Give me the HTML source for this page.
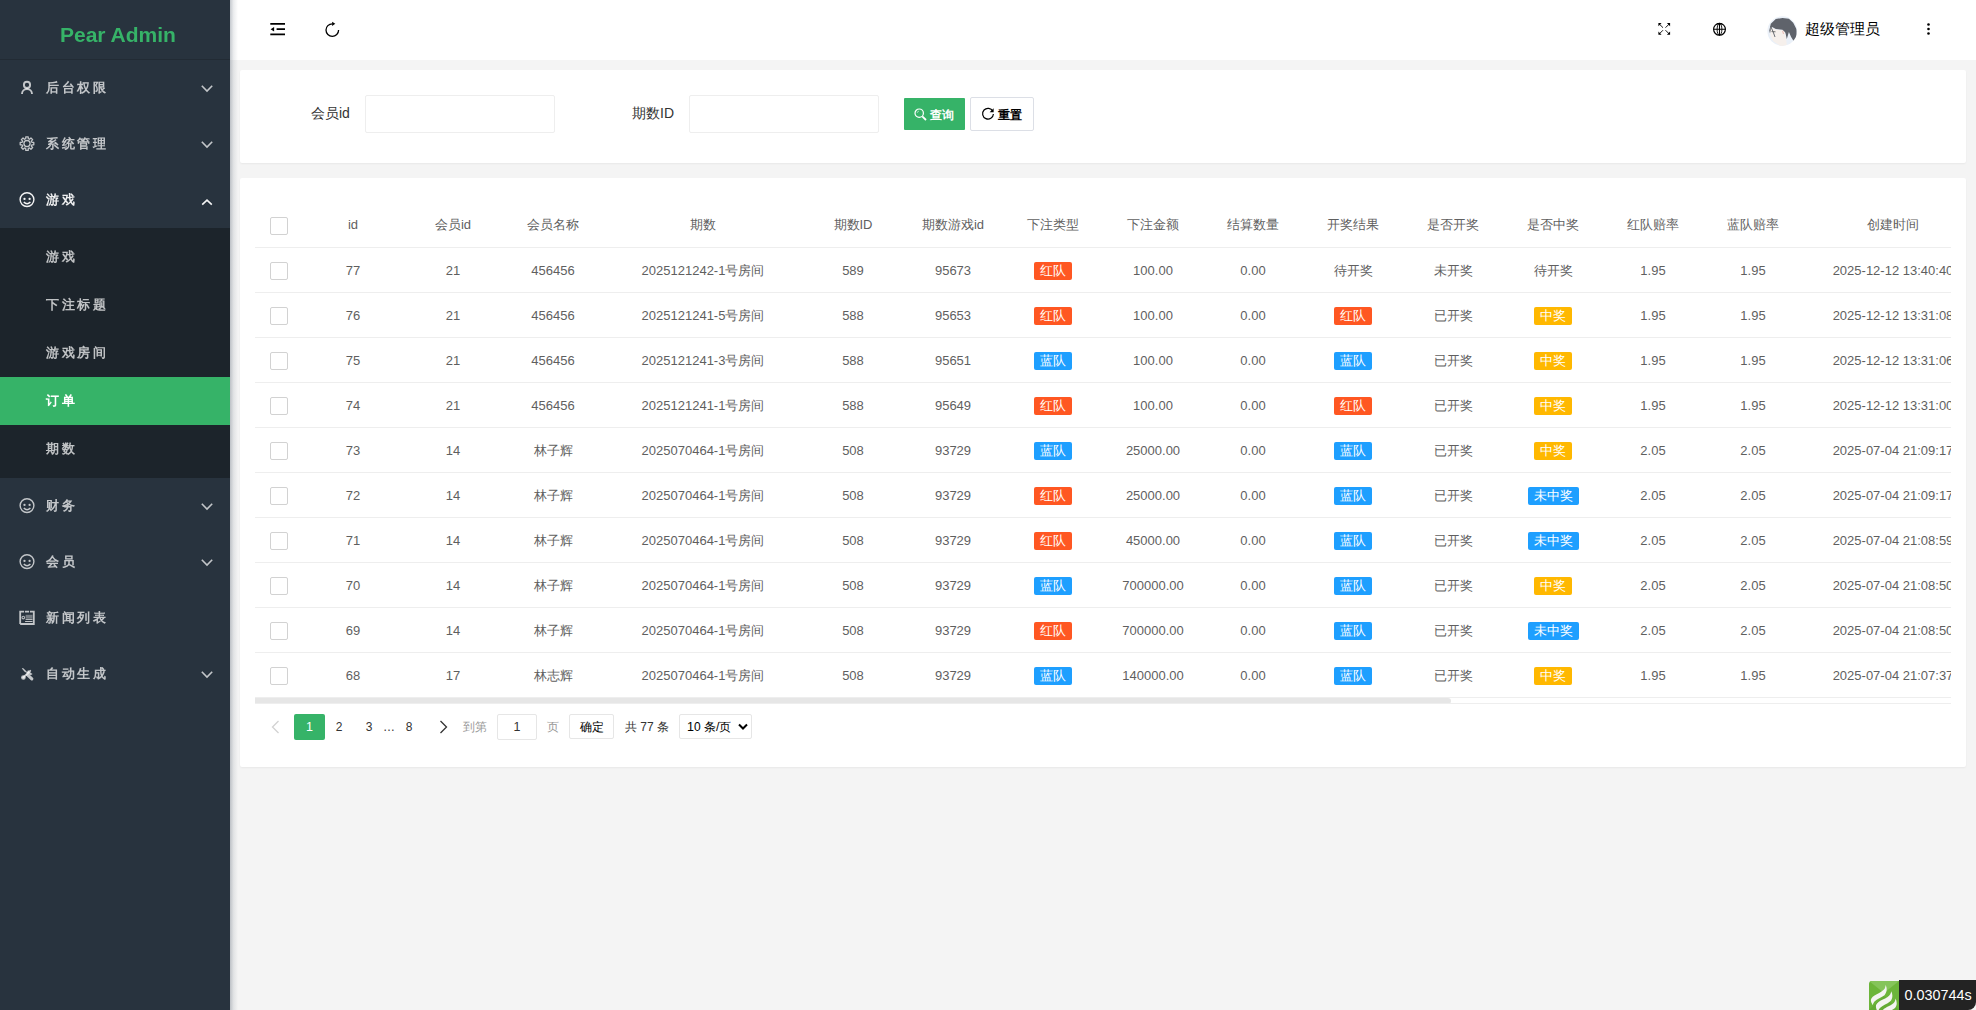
<!DOCTYPE html><html><head><meta charset="utf-8"><style>
*{box-sizing:border-box;margin:0;padding:0}
html,body{width:1976px;height:1010px;overflow:hidden}
body{font-family:"Liberation Sans",sans-serif;font-size:14px;color:#333;background:#f4f4f4;position:relative}
.a{position:absolute}
#side{position:absolute;left:0;top:0;width:230px;height:1010px;background:#28333e;z-index:5;will-change:transform}
#sh{position:absolute;left:230px;top:0;width:8px;height:1010px;background:linear-gradient(to right,rgba(40,55,75,.27),rgba(40,55,75,.09) 45%,rgba(40,55,75,0));z-index:4}
#logo{position:absolute;left:0;top:0;width:230px;height:60px;border-bottom:1px solid rgba(0,0,0,.15)}
#logo span{position:absolute;left:60px;top:21px;font-size:21px;font-weight:bold;color:#36b368;line-height:28px}
.mi{position:absolute;left:0;width:230px;height:56px;color:rgba(255,255,255,.72)}
.mi .t{position:absolute;left:46px;top:0;line-height:56px;font-size:13px;letter-spacing:2.7px;font-weight:bold}
.mi svg,.ci svg{position:absolute}
#child{position:absolute;left:0;top:228px;width:230px;height:250px;background:#1c242b}
.ci{position:absolute;left:0;width:230px;height:48px;color:rgba(255,255,255,.72)}
.ci .t{position:absolute;left:46px;top:0;line-height:48px;font-size:13px;letter-spacing:2.7px;font-weight:bold}
.ci.act{background:#36b368;color:#fff}
#head{position:absolute;left:230px;top:0;width:1746px;height:60px;background:#fff}
.card{position:absolute;left:240px;width:1726px;background:#fff;border-radius:2px;box-shadow:0 1px 2px rgba(0,0,0,.05)}
.lbl{position:absolute;font-size:14px;color:#333;line-height:20px;white-space:nowrap}
.inp{position:absolute;width:190px;height:38px;border:1px solid #eee;border-radius:2px;background:#fff}
.c{position:absolute;text-align:center;color:#5f5f5f;font-size:13px;line-height:20px;white-space:nowrap}
.hl{position:absolute;left:255px;width:1696px;height:1px;background:#eee}
.cb{position:absolute;left:270px;width:18px;height:18px;border:1px solid #d2d2d2;border-radius:2px;background:#fff}
.bd{display:inline-block;height:18px;line-height:18px;padding:0 6px;font-size:13px;color:#fff;border-radius:2px;vertical-align:top}
.red{background:#ff5722}.blue{background:#1e9fff}.org{background:#ffb800}
.pg{position:absolute;font-size:12px;line-height:26px;height:26px;text-align:center;color:#333;white-space:nowrap}
</style></head><body>
<div id="side"><div id="logo"><span>Pear Admin</span></div>
<div class="mi" style="top:60px;"><span class="t">后台权限</span></div>
<div class="mi" style="top:116px;"><span class="t">系统管理</span></div>
<div class="mi" style="top:172px;color:rgba(255,255,255,.92);"><span class="t">游戏</span></div>
<div id="child">
<div class="ci" style="top:5px"><span class="t">游戏</span></div>
<div class="ci" style="top:53px"><span class="t">下注标题</span></div>
<div class="ci" style="top:101px"><span class="t">游戏房间</span></div>
<div class="ci act" style="top:149px"><span class="t">订单</span></div>
<div class="ci" style="top:197px"><span class="t">期数</span></div>
</div>
<div class="mi" style="top:478px;"><span class="t">财务</span></div>
<div class="mi" style="top:534px;"><span class="t">会员</span></div>
<div class="mi" style="top:590px;"><span class="t">新闻列表</span></div>
<div class="mi" style="top:646px;"><span class="t">自动生成</span></div>
<svg class="a" style="left:0;top:0" width="230" height="1010" viewBox="0 0 230 1010"><circle cx="27" cy="84.9" r="3.1" fill="none" stroke="rgba(255,255,255,.72)" stroke-width="1.9"/><path d="M22 94 A5 5 0 0 1 32 94" fill="none" stroke="rgba(255,255,255,.72)" stroke-width="1.9"/><path d="M25.71 138.77 L25.80 136.80 L28.20 136.80 L28.29 138.77 L29.50 139.27 L30.96 137.95 L32.65 139.64 L31.33 141.10 L31.83 142.31 L33.80 142.40 L33.80 144.80 L31.83 144.89 L31.33 146.10 L32.65 147.56 L30.96 149.25 L29.50 147.93 L28.29 148.43 L28.20 150.40 L25.80 150.40 L25.71 148.43 L24.50 147.93 L23.04 149.25 L21.35 147.56 L22.67 146.10 L22.17 144.89 L20.20 144.80 L20.20 142.40 L22.17 142.31 L22.67 141.10 L21.35 139.64 L23.04 137.95 L24.50 139.27 Z" fill="none" stroke="rgba(255,255,255,.72)" stroke-width="1.3" stroke-linejoin="round"/><circle cx="27" cy="143.6" r="3.1" fill="none" stroke="rgba(255,255,255,.72)" stroke-width="1.3"/><circle cx="27" cy="199.6" r="6.9" fill="none" stroke="rgba(255,255,255,.95)" stroke-width="1.4"/><circle cx="24.5" cy="198.9" r="1.15" fill="rgba(255,255,255,.95)"/><circle cx="29.6" cy="198.9" r="1.15" fill="rgba(255,255,255,.95)"/><path d="M23.8 202.0 Q27 205.4 30.4 202.0" fill="none" stroke="rgba(255,255,255,.95)" stroke-width="1.4"/><circle cx="27" cy="505.6" r="6.9" fill="none" stroke="rgba(255,255,255,.72)" stroke-width="1.4"/><circle cx="24.5" cy="504.90000000000003" r="1.15" fill="rgba(255,255,255,.72)"/><circle cx="29.6" cy="504.90000000000003" r="1.15" fill="rgba(255,255,255,.72)"/><path d="M23.8 508.0 Q27 511.40000000000003 30.4 508.0" fill="none" stroke="rgba(255,255,255,.72)" stroke-width="1.4"/><circle cx="27" cy="561.6" r="6.9" fill="none" stroke="rgba(255,255,255,.72)" stroke-width="1.4"/><circle cx="24.5" cy="560.9" r="1.15" fill="rgba(255,255,255,.72)"/><circle cx="29.6" cy="560.9" r="1.15" fill="rgba(255,255,255,.72)"/><path d="M23.8 564.0 Q27 567.4 30.4 564.0" fill="none" stroke="rgba(255,255,255,.72)" stroke-width="1.4"/><path d="M20.2 624.0 V611.6999999999999 H24 M24.9 611.6999999999999 H29.1 M30 611.6999999999999 H33.8 V624.0 H20.2" fill="none" stroke="rgba(255,255,255,.72)" stroke-width="1.8"/><circle cx="23.3" cy="617.5999999999999" r="1.3" fill="none" stroke="rgba(255,255,255,.72)" stroke-width="1.1" opacity=".9"/><rect x="25.6" y="614.8" width="6.9" height="3.8" fill="rgba(255,255,255,.72)" opacity=".5"/><path d="M25.6 619.4 H32.5 M25.1 621.5 H32.5" stroke="rgba(255,255,255,.72)" stroke-width="1" /><g transform="translate(27 673.5)"><path d="M-3.6 3.9 L3.2 -2.6" stroke="rgba(255,255,255,.72)" stroke-width="2" stroke-linecap="round"/><circle cx="-3.6" cy="4" r="2.3" fill="rgba(255,255,255,.72)"/><path d="M1.2 -3.6 A2.5 2.5 0 1 0 5.6 0.4 L4 -0.4 L3.6 -1 L2.6 -1.6 Z" fill="rgba(255,255,255,.72)"/><path d="M-5.2 -4.9 L-4 -5.6 L-0.6 -2.2 L-1.7 -1.1 Z" fill="rgba(255,255,255,.72)"/><path d="M-0.8 -1.8 L0.7 -0.3" stroke="rgba(255,255,255,.72)" stroke-width="1.2"/><path d="M0.6 1.4 L4.8 5.3" stroke="rgba(255,255,255,.72)" stroke-width="3.2" stroke-linecap="round"/></g><path d="M201.8 85.8 L207 91 L212.2 85.8" fill="none" stroke="rgba(255,255,255,.72)" stroke-width="1.6"/><path d="M201.8 141.8 L207 147 L212.2 141.8" fill="none" stroke="rgba(255,255,255,.72)" stroke-width="1.6"/><path d="M201.8 503.8 L207 509 L212.2 503.8" fill="none" stroke="rgba(255,255,255,.72)" stroke-width="1.6"/><path d="M201.8 559.8 L207 565 L212.2 559.8" fill="none" stroke="rgba(255,255,255,.72)" stroke-width="1.6"/><path d="M201.8 671.8 L207 677 L212.2 671.8" fill="none" stroke="rgba(255,255,255,.72)" stroke-width="1.6"/><path d="M202.2 204.6 L207 200.1 L211.8 204.6" fill="none" stroke="rgba(255,255,255,.95)" stroke-width="1.6"/></svg>
</div><div id="sh"></div>
<div id="head"></div>
<svg class="a" style="left:0;top:0" width="1976" height="60" viewBox="0 0 1976 60"><path d="M270.3 23.9 H285 M276.6 29.2 H285 M270.3 34.4 H285" stroke="#000" stroke-width="1.8"/><path d="M270.6 29.2 L274.1 26.9 V31.5 Z" fill="#000"/><path d="M338.6 30.1 A6.3 6.3 0 1 1 332.3 23.8" fill="none" stroke="#000" stroke-width="1.3"/><path d="M332.1 21.7 L335.3 23.8 L332.1 25.900000000000002 Z" fill="#000"/><path d="M1659.2 23.9 L1663 27.7 M1669.3 23.9 L1665.5 27.7 M1659.2 34 L1663 30.2 M1669.3 34 L1665.5 30.2" stroke="#000" stroke-width="0.9"/><path d="M1658.4 23.1 H1661.6 L1658.4 26.3 Z M1670.1 23.1 H1666.9 L1670.1 26.3 Z M1658.4 34.8 H1661.6 L1658.4 31.6 Z M1670.1 34.8 H1666.9 L1670.1 31.6 Z" fill="#000"/><circle cx="1719.5" cy="29.3" r="5.9" fill="none" stroke="#000" stroke-width="1.2"/><ellipse cx="1719.5" cy="29.3" rx="2.4" ry="5.9" fill="none" stroke="#000" stroke-width="0.9"/><path d="M1713.6 29.3 H1725.4 M1719.5 23.4 V35.2 M1716.9 23.700000000000003 H1722.1" stroke="#000" stroke-width="1.1"/></svg>
<svg class="a" style="left:1764px;top:12px" width="36" height="36" viewBox="0 0 36 36"><defs><clipPath id="av"><circle cx="18.2" cy="19.1" r="14.8"/></clipPath></defs><g clip-path="url(#av)"><rect width="36" height="36" fill="#eaf0f8"/>
<path d="M5.3 18.5 L6.8 11.8 L11.8 7.1 L18.5 5.9 L24.9 6.8 L29.2 10.7 L32.4 17.1 L32.8 24.9 L29.6 28.9 L27.1 24.9 L24.9 20 L22.8 27.1 L21.4 20.7 L18.5 17.8 L11.8 17.1 L8.2 15 L6 21.4 Z" fill="#5f636b"/>
<path d="M6.8 15.3 L11.8 17.8 L18.5 18.2 L20.7 20 L22.1 27.1 L22.8 33 L17.1 34.5 L9.3 29.2 L6.4 23.2 Z" fill="#f6f0ec"/>
<path d="M6.5 14 L9 19.5 L11 25" stroke="#6a6e76" stroke-width="1" fill="none"/>
<path d="M7.5 19.6 L11.5 19.8" stroke="#555" stroke-width=".8"/>
<path d="M18.6 18.8 L19.5 22" stroke="#e8b8b0" stroke-width="1"/>
</g></svg>
<div class="a" style="left:1805px;top:18px;font-size:15px;line-height:22px;color:#000;white-space:nowrap">超级管理员</div>
<svg class="a" style="left:1926px;top:22px" width="5" height="14" viewBox="0 0 5 14"><circle cx="2.5" cy="2.5" r="1.3" fill="#000"/><circle cx="2.5" cy="7" r="1.3" fill="#000"/><circle cx="2.5" cy="11.5" r="1.3" fill="#000"/></svg>
<div class="card" style="top:70px;height:93px"></div>
<div class="lbl" style="left:311px;top:103px">会员id</div>
<div class="inp" style="left:365px;top:95px"></div>
<div class="lbl" style="left:632px;top:103px">期数ID</div>
<div class="inp" style="left:689px;top:95px"></div>
<div class="a" style="left:904px;top:98px;width:61px;height:32px;background:#36b368;border-radius:1px"></div>
<svg class="a" style="left:914px;top:108px" width="13" height="13" viewBox="0 0 13 13"><circle cx="5.2" cy="5.2" r="4.2" fill="none" stroke="#fff" stroke-width="1.2"/><path d="M8.3 8.3 L12 12" stroke="#fff" stroke-width="1.8"/><path d="M3.3 4.5 A2 2 0 0 1 4.5 3.3" stroke="#fff" stroke-width=".9" fill="none"/></svg>
<div class="a" style="left:930px;top:106px;font-size:12px;line-height:18px;color:#fff;font-weight:bold;white-space:nowrap">查询</div>
<div class="a" style="left:970px;top:97px;width:64px;height:34px;background:#fff;border:1px solid #dcdfe6;border-radius:2px"></div>
<svg class="a" style="left:981px;top:107px" width="14" height="14" viewBox="0 0 14 14"><path d="M11.8 4.2 A5.4 5.4 0 1 0 12.4 7" fill="none" stroke="#000" stroke-width="1.2"/><path d="M12.6 1.2 V5.2 H8.6 Z" fill="#000"/></svg>
<div class="a" style="left:998px;top:106px;font-size:12px;line-height:18px;color:#000;font-weight:bold;white-space:nowrap">重置</div>
<div class="card" style="top:178px;height:589px"></div>
<div class="a" style="left:0;top:0;width:1951px;height:1010px;overflow:hidden">
<div class="cb" style="top:217px"></div>
<div class="c" style="left:253px;width:200px;top:215px">id</div>
<div class="c" style="left:353px;width:200px;top:215px">会员id</div>
<div class="c" style="left:453px;width:200px;top:215px">会员名称</div>
<div class="c" style="left:603px;width:200px;top:215px">期数</div>
<div class="c" style="left:753px;width:200px;top:215px">期数ID</div>
<div class="c" style="left:853px;width:200px;top:215px">期数游戏id</div>
<div class="c" style="left:953px;width:200px;top:215px">下注类型</div>
<div class="c" style="left:1053px;width:200px;top:215px">下注金额</div>
<div class="c" style="left:1153px;width:200px;top:215px">结算数量</div>
<div class="c" style="left:1253px;width:200px;top:215px">开奖结果</div>
<div class="c" style="left:1353px;width:200px;top:215px">是否开奖</div>
<div class="c" style="left:1453px;width:200px;top:215px">是否中奖</div>
<div class="c" style="left:1553px;width:200px;top:215px">红队赔率</div>
<div class="c" style="left:1653px;width:200px;top:215px">蓝队赔率</div>
<div class="c" style="left:1793px;width:200px;top:215px">创建时间</div>
<div class="hl" style="top:247px"></div>
<div class="cb" style="top:262px"></div>
<div class="c" style="left:253px;width:200px;top:261px">77</div>
<div class="c" style="left:353px;width:200px;top:261px">21</div>
<div class="c" style="left:453px;width:200px;top:261px">456456</div>
<div class="c" style="left:603px;width:200px;top:261px">2025121242-1号房间</div>
<div class="c" style="left:753px;width:200px;top:261px">589</div>
<div class="c" style="left:853px;width:200px;top:261px">95673</div>
<div class="c" style="left:953px;width:200px;top:262px;line-height:18px"><span class="bd red">红队</span></div>
<div class="c" style="left:1053px;width:200px;top:261px">100.00</div>
<div class="c" style="left:1153px;width:200px;top:261px">0.00</div>
<div class="c" style="left:1253px;width:200px;top:261px">待开奖</div>
<div class="c" style="left:1353px;width:200px;top:261px">未开奖</div>
<div class="c" style="left:1453px;width:200px;top:261px">待开奖</div>
<div class="c" style="left:1553px;width:200px;top:261px">1.95</div>
<div class="c" style="left:1653px;width:200px;top:261px">1.95</div>
<div class="c" style="left:1793px;width:200px;top:261px">2025-12-12 13:40:40</div>
<div class="hl" style="top:292px"></div>
<div class="cb" style="top:307px"></div>
<div class="c" style="left:253px;width:200px;top:306px">76</div>
<div class="c" style="left:353px;width:200px;top:306px">21</div>
<div class="c" style="left:453px;width:200px;top:306px">456456</div>
<div class="c" style="left:603px;width:200px;top:306px">2025121241-5号房间</div>
<div class="c" style="left:753px;width:200px;top:306px">588</div>
<div class="c" style="left:853px;width:200px;top:306px">95653</div>
<div class="c" style="left:953px;width:200px;top:307px;line-height:18px"><span class="bd red">红队</span></div>
<div class="c" style="left:1053px;width:200px;top:306px">100.00</div>
<div class="c" style="left:1153px;width:200px;top:306px">0.00</div>
<div class="c" style="left:1253px;width:200px;top:307px;line-height:18px"><span class="bd red">红队</span></div>
<div class="c" style="left:1353px;width:200px;top:306px">已开奖</div>
<div class="c" style="left:1453px;width:200px;top:307px;line-height:18px"><span class="bd org">中奖</span></div>
<div class="c" style="left:1553px;width:200px;top:306px">1.95</div>
<div class="c" style="left:1653px;width:200px;top:306px">1.95</div>
<div class="c" style="left:1793px;width:200px;top:306px">2025-12-12 13:31:08</div>
<div class="hl" style="top:337px"></div>
<div class="cb" style="top:352px"></div>
<div class="c" style="left:253px;width:200px;top:351px">75</div>
<div class="c" style="left:353px;width:200px;top:351px">21</div>
<div class="c" style="left:453px;width:200px;top:351px">456456</div>
<div class="c" style="left:603px;width:200px;top:351px">2025121241-3号房间</div>
<div class="c" style="left:753px;width:200px;top:351px">588</div>
<div class="c" style="left:853px;width:200px;top:351px">95651</div>
<div class="c" style="left:953px;width:200px;top:352px;line-height:18px"><span class="bd blue">蓝队</span></div>
<div class="c" style="left:1053px;width:200px;top:351px">100.00</div>
<div class="c" style="left:1153px;width:200px;top:351px">0.00</div>
<div class="c" style="left:1253px;width:200px;top:352px;line-height:18px"><span class="bd blue">蓝队</span></div>
<div class="c" style="left:1353px;width:200px;top:351px">已开奖</div>
<div class="c" style="left:1453px;width:200px;top:352px;line-height:18px"><span class="bd org">中奖</span></div>
<div class="c" style="left:1553px;width:200px;top:351px">1.95</div>
<div class="c" style="left:1653px;width:200px;top:351px">1.95</div>
<div class="c" style="left:1793px;width:200px;top:351px">2025-12-12 13:31:06</div>
<div class="hl" style="top:382px"></div>
<div class="cb" style="top:397px"></div>
<div class="c" style="left:253px;width:200px;top:396px">74</div>
<div class="c" style="left:353px;width:200px;top:396px">21</div>
<div class="c" style="left:453px;width:200px;top:396px">456456</div>
<div class="c" style="left:603px;width:200px;top:396px">2025121241-1号房间</div>
<div class="c" style="left:753px;width:200px;top:396px">588</div>
<div class="c" style="left:853px;width:200px;top:396px">95649</div>
<div class="c" style="left:953px;width:200px;top:397px;line-height:18px"><span class="bd red">红队</span></div>
<div class="c" style="left:1053px;width:200px;top:396px">100.00</div>
<div class="c" style="left:1153px;width:200px;top:396px">0.00</div>
<div class="c" style="left:1253px;width:200px;top:397px;line-height:18px"><span class="bd red">红队</span></div>
<div class="c" style="left:1353px;width:200px;top:396px">已开奖</div>
<div class="c" style="left:1453px;width:200px;top:397px;line-height:18px"><span class="bd org">中奖</span></div>
<div class="c" style="left:1553px;width:200px;top:396px">1.95</div>
<div class="c" style="left:1653px;width:200px;top:396px">1.95</div>
<div class="c" style="left:1793px;width:200px;top:396px">2025-12-12 13:31:00</div>
<div class="hl" style="top:427px"></div>
<div class="cb" style="top:442px"></div>
<div class="c" style="left:253px;width:200px;top:441px">73</div>
<div class="c" style="left:353px;width:200px;top:441px">14</div>
<div class="c" style="left:453px;width:200px;top:441px">林子辉</div>
<div class="c" style="left:603px;width:200px;top:441px">2025070464-1号房间</div>
<div class="c" style="left:753px;width:200px;top:441px">508</div>
<div class="c" style="left:853px;width:200px;top:441px">93729</div>
<div class="c" style="left:953px;width:200px;top:442px;line-height:18px"><span class="bd blue">蓝队</span></div>
<div class="c" style="left:1053px;width:200px;top:441px">25000.00</div>
<div class="c" style="left:1153px;width:200px;top:441px">0.00</div>
<div class="c" style="left:1253px;width:200px;top:442px;line-height:18px"><span class="bd blue">蓝队</span></div>
<div class="c" style="left:1353px;width:200px;top:441px">已开奖</div>
<div class="c" style="left:1453px;width:200px;top:442px;line-height:18px"><span class="bd org">中奖</span></div>
<div class="c" style="left:1553px;width:200px;top:441px">2.05</div>
<div class="c" style="left:1653px;width:200px;top:441px">2.05</div>
<div class="c" style="left:1793px;width:200px;top:441px">2025-07-04 21:09:17</div>
<div class="hl" style="top:472px"></div>
<div class="cb" style="top:487px"></div>
<div class="c" style="left:253px;width:200px;top:486px">72</div>
<div class="c" style="left:353px;width:200px;top:486px">14</div>
<div class="c" style="left:453px;width:200px;top:486px">林子辉</div>
<div class="c" style="left:603px;width:200px;top:486px">2025070464-1号房间</div>
<div class="c" style="left:753px;width:200px;top:486px">508</div>
<div class="c" style="left:853px;width:200px;top:486px">93729</div>
<div class="c" style="left:953px;width:200px;top:487px;line-height:18px"><span class="bd red">红队</span></div>
<div class="c" style="left:1053px;width:200px;top:486px">25000.00</div>
<div class="c" style="left:1153px;width:200px;top:486px">0.00</div>
<div class="c" style="left:1253px;width:200px;top:487px;line-height:18px"><span class="bd blue">蓝队</span></div>
<div class="c" style="left:1353px;width:200px;top:486px">已开奖</div>
<div class="c" style="left:1453px;width:200px;top:487px;line-height:18px"><span class="bd blue">未中奖</span></div>
<div class="c" style="left:1553px;width:200px;top:486px">2.05</div>
<div class="c" style="left:1653px;width:200px;top:486px">2.05</div>
<div class="c" style="left:1793px;width:200px;top:486px">2025-07-04 21:09:17</div>
<div class="hl" style="top:517px"></div>
<div class="cb" style="top:532px"></div>
<div class="c" style="left:253px;width:200px;top:531px">71</div>
<div class="c" style="left:353px;width:200px;top:531px">14</div>
<div class="c" style="left:453px;width:200px;top:531px">林子辉</div>
<div class="c" style="left:603px;width:200px;top:531px">2025070464-1号房间</div>
<div class="c" style="left:753px;width:200px;top:531px">508</div>
<div class="c" style="left:853px;width:200px;top:531px">93729</div>
<div class="c" style="left:953px;width:200px;top:532px;line-height:18px"><span class="bd red">红队</span></div>
<div class="c" style="left:1053px;width:200px;top:531px">45000.00</div>
<div class="c" style="left:1153px;width:200px;top:531px">0.00</div>
<div class="c" style="left:1253px;width:200px;top:532px;line-height:18px"><span class="bd blue">蓝队</span></div>
<div class="c" style="left:1353px;width:200px;top:531px">已开奖</div>
<div class="c" style="left:1453px;width:200px;top:532px;line-height:18px"><span class="bd blue">未中奖</span></div>
<div class="c" style="left:1553px;width:200px;top:531px">2.05</div>
<div class="c" style="left:1653px;width:200px;top:531px">2.05</div>
<div class="c" style="left:1793px;width:200px;top:531px">2025-07-04 21:08:59</div>
<div class="hl" style="top:562px"></div>
<div class="cb" style="top:577px"></div>
<div class="c" style="left:253px;width:200px;top:576px">70</div>
<div class="c" style="left:353px;width:200px;top:576px">14</div>
<div class="c" style="left:453px;width:200px;top:576px">林子辉</div>
<div class="c" style="left:603px;width:200px;top:576px">2025070464-1号房间</div>
<div class="c" style="left:753px;width:200px;top:576px">508</div>
<div class="c" style="left:853px;width:200px;top:576px">93729</div>
<div class="c" style="left:953px;width:200px;top:577px;line-height:18px"><span class="bd blue">蓝队</span></div>
<div class="c" style="left:1053px;width:200px;top:576px">700000.00</div>
<div class="c" style="left:1153px;width:200px;top:576px">0.00</div>
<div class="c" style="left:1253px;width:200px;top:577px;line-height:18px"><span class="bd blue">蓝队</span></div>
<div class="c" style="left:1353px;width:200px;top:576px">已开奖</div>
<div class="c" style="left:1453px;width:200px;top:577px;line-height:18px"><span class="bd org">中奖</span></div>
<div class="c" style="left:1553px;width:200px;top:576px">2.05</div>
<div class="c" style="left:1653px;width:200px;top:576px">2.05</div>
<div class="c" style="left:1793px;width:200px;top:576px">2025-07-04 21:08:50</div>
<div class="hl" style="top:607px"></div>
<div class="cb" style="top:622px"></div>
<div class="c" style="left:253px;width:200px;top:621px">69</div>
<div class="c" style="left:353px;width:200px;top:621px">14</div>
<div class="c" style="left:453px;width:200px;top:621px">林子辉</div>
<div class="c" style="left:603px;width:200px;top:621px">2025070464-1号房间</div>
<div class="c" style="left:753px;width:200px;top:621px">508</div>
<div class="c" style="left:853px;width:200px;top:621px">93729</div>
<div class="c" style="left:953px;width:200px;top:622px;line-height:18px"><span class="bd red">红队</span></div>
<div class="c" style="left:1053px;width:200px;top:621px">700000.00</div>
<div class="c" style="left:1153px;width:200px;top:621px">0.00</div>
<div class="c" style="left:1253px;width:200px;top:622px;line-height:18px"><span class="bd blue">蓝队</span></div>
<div class="c" style="left:1353px;width:200px;top:621px">已开奖</div>
<div class="c" style="left:1453px;width:200px;top:622px;line-height:18px"><span class="bd blue">未中奖</span></div>
<div class="c" style="left:1553px;width:200px;top:621px">2.05</div>
<div class="c" style="left:1653px;width:200px;top:621px">2.05</div>
<div class="c" style="left:1793px;width:200px;top:621px">2025-07-04 21:08:50</div>
<div class="hl" style="top:652px"></div>
<div class="cb" style="top:667px"></div>
<div class="c" style="left:253px;width:200px;top:666px">68</div>
<div class="c" style="left:353px;width:200px;top:666px">17</div>
<div class="c" style="left:453px;width:200px;top:666px">林志辉</div>
<div class="c" style="left:603px;width:200px;top:666px">2025070464-1号房间</div>
<div class="c" style="left:753px;width:200px;top:666px">508</div>
<div class="c" style="left:853px;width:200px;top:666px">93729</div>
<div class="c" style="left:953px;width:200px;top:667px;line-height:18px"><span class="bd blue">蓝队</span></div>
<div class="c" style="left:1053px;width:200px;top:666px">140000.00</div>
<div class="c" style="left:1153px;width:200px;top:666px">0.00</div>
<div class="c" style="left:1253px;width:200px;top:667px;line-height:18px"><span class="bd blue">蓝队</span></div>
<div class="c" style="left:1353px;width:200px;top:666px">已开奖</div>
<div class="c" style="left:1453px;width:200px;top:667px;line-height:18px"><span class="bd org">中奖</span></div>
<div class="c" style="left:1553px;width:200px;top:666px">1.95</div>
<div class="c" style="left:1653px;width:200px;top:666px">1.95</div>
<div class="c" style="left:1793px;width:200px;top:666px">2025-07-04 21:07:37</div>
</div>
<div class="a" style="left:255px;top:697px;width:1696px;height:1px;background:#eee"></div>
<div class="a" style="left:255px;top:698px;width:1196px;height:6px;background:#e6e6e6;border-radius:0 3px 3px 0"></div>
<div class="a" style="left:255px;top:703px;width:1696px;height:1px;background:#eee"></div>
<svg class="a" style="left:271px;top:720px" width="9" height="14" viewBox="0 0 9 14"><path d="M7.5 1 L1.5 7 L7.5 13" fill="none" stroke="#d2d2d2" stroke-width="1.3"/></svg>
<div class="pg" style="left:294px;top:714px;width:31px;background:#36b368;color:#fff;border-radius:2px"><span style="font-size:12.5px">1</span></div>
<div class="pg" style="left:324px;top:714px;width:30px">2</div>
<div class="pg" style="left:354px;top:714px;width:30px">3</div>
<div class="pg" style="left:379px;top:714px;width:20px">…</div>
<div class="pg" style="left:394px;top:714px;width:30px">8</div>
<svg class="a" style="left:439px;top:720px" width="9" height="14" viewBox="0 0 9 14"><path d="M1.5 1 L7.5 7 L1.5 13" fill="none" stroke="#333" stroke-width="1.3"/></svg>
<div class="pg" style="left:463px;top:714px;color:#999">到第</div>
<div class="a" style="left:497px;top:714px;width:40px;height:26px;border:1px solid #e6e6e6;border-radius:2px"></div>
<div class="pg" style="left:497px;top:714px;width:40px"><span style="font-size:12.5px">1</span></div>
<div class="pg" style="left:547px;top:714px;color:#999">页</div>
<div class="a" style="left:569px;top:714px;width:45px;height:25px;border:1px solid #e6e6e6;border-radius:2px"></div>
<div class="pg" style="left:569px;top:714px;width:45px;line-height:27px;color:#000">确定</div>
<div class="pg" style="left:625px;top:714px">共 77 条</div>
<div class="a" style="left:679px;top:714px;width:73px;height:25px;border:1px solid #e6e6e6;border-radius:2px"></div>
<div class="pg" style="left:687px;top:714px;color:#000"><span style="font-size:12.5px">1</span>0 条/页</div>
<svg class="a" style="left:738px;top:723px" width="10" height="8" viewBox="0 0 10 8"><path d="M1 1.5 L5 5.5 L9 1.5" fill="none" stroke="#000" stroke-width="2"/></svg>
<div class="a" style="left:1869px;top:981px;width:30px;height:29px;background:#6cb53a;border-radius:3px 0 0 0;overflow:hidden"><svg width="30" height="29" viewBox="0 0 30 29" style="position:absolute;left:0;top:0"><path d="M0 0 L15 12 L30 0 Z" fill="#85c45a"/><path d="M0 29 L15 15 L30 29 Z" fill="#5fa532" opacity=".6"/><path d="M16.55 4.09 C18.4 7 18 11.5 15.5 14.2 C12.5 16.5 8 18 5.5 20.5 C4.5 21.7 4 23 3.75 24.29 C2.8 22.5 1.6 20.5 1.9 18.8 C2.3 16.5 4.5 14.8 7.79 13.18 C11 11.5 14.5 9.8 15.8 7.5 C16.3 6.5 16.5 5.3 16.55 4.09 Z" fill="#f4f4f2"/><path d="M22.27 10.15 C24 13.5 23.8 18 21 20.6 C18 23 14 24.5 11.5 26.5 C10.3 27.5 9.7 28.5 9.5 29.5 L8 29.5 C7 27.5 6.6 25.5 7.2 23.8 C8.2 21.6 11 20 13.86 18.57 C17 17 20 15.5 21.3 13.2 C21.8 12.3 22.1 11.2 22.27 10.15 Z" fill="#f4f4f2"/><path d="M26.48 17.56 C28.2 20.5 28.2 24.5 26 27 C24.5 28.5 22 29.5 20 30 L13 30 C14.5 28 17 26.5 19.5 25.3 C22.5 23.8 25 22.5 25.9 20.25 C26.2 19.4 26.4 18.5 26.48 17.56 Z" fill="#f4f4f2"/></svg></div>
<div class="a" style="left:1899px;top:980px;width:77px;height:30px;background:#232323;border-radius:0 0 8px 0;color:#fff;font-size:14.4px;line-height:30px;padding-left:5.5px;white-space:nowrap">0.030744s</div>
</body></html>
